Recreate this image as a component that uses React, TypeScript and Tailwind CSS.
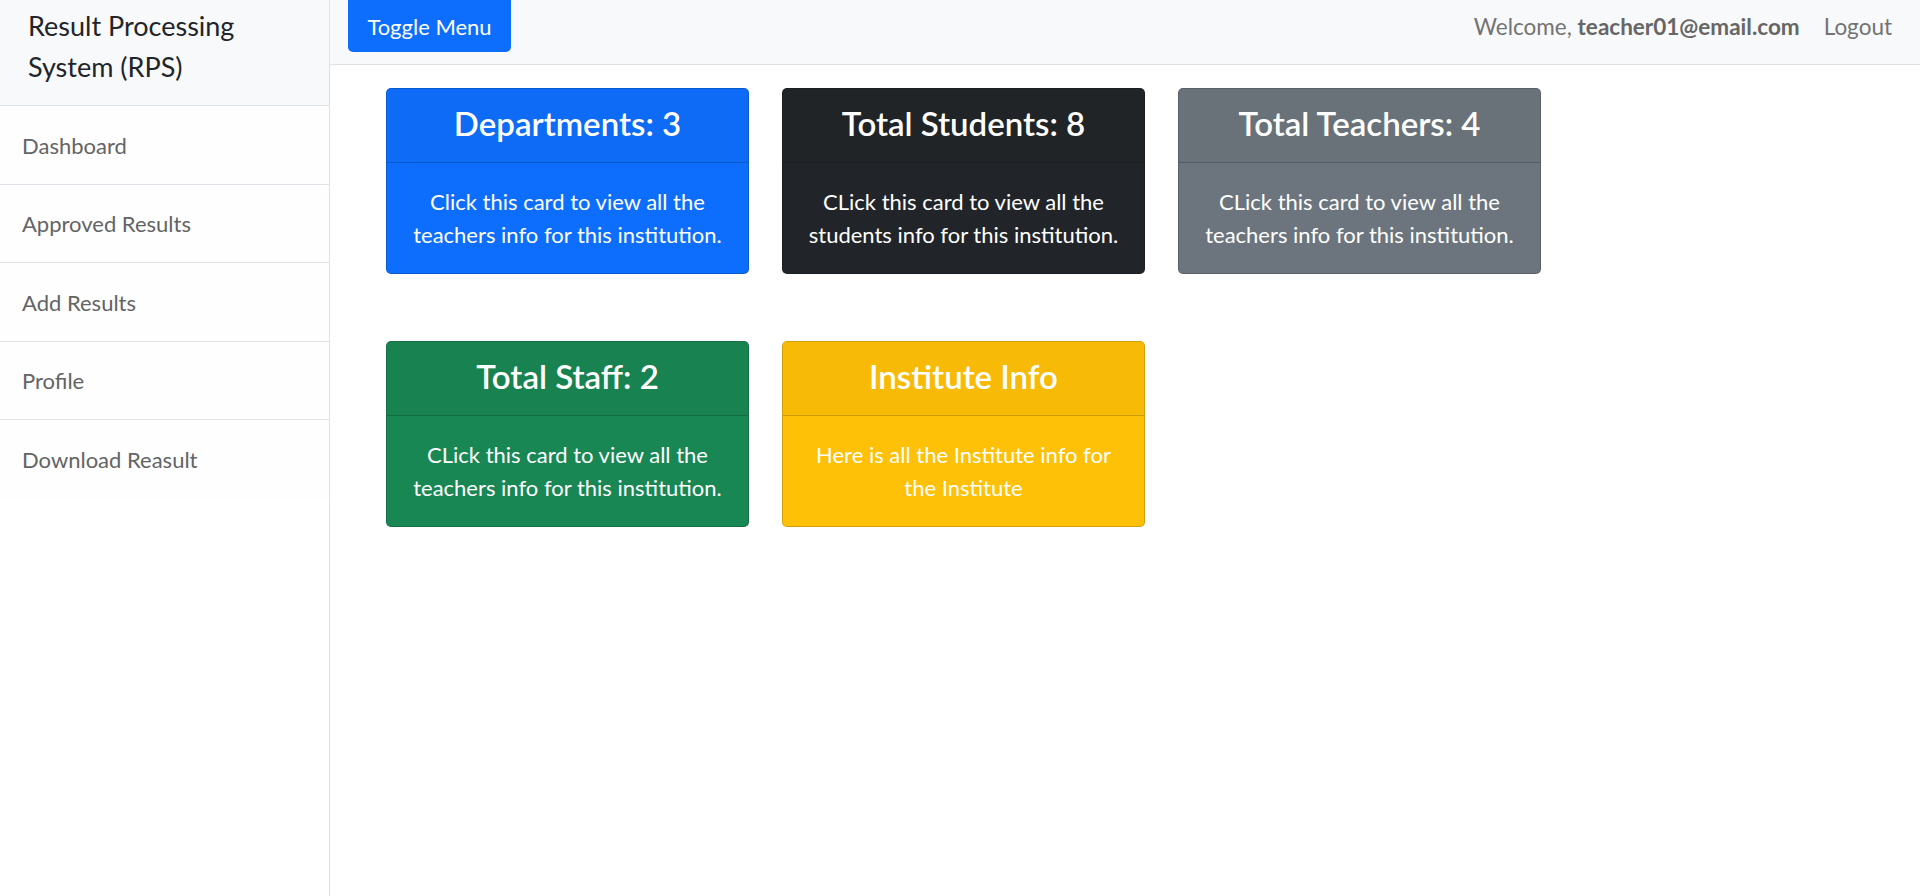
import React from 'react';

type Card = {
  title: string;
  text: string;
  head: string;
  body: string;
};

const cards: Card[] = [
  {
    title: 'Departments: 3',
    text: 'Click this card to view all the teachers info for this institution.',
    head: 'bg-[#0d6bf5]',
    body: 'bg-[#0d6efd]',
  },
  {
    title: 'Total Students: 8',
    text: 'CLick this card to view all the students info for this institution.',
    head: 'bg-[#202427]',
    body: 'bg-[#212529]',
  },
  {
    title: 'Total Teachers: 4',
    text: 'CLick this card to view all the teachers info for this institution.',
    head: 'bg-[#697279]',
    body: 'bg-[#6c757d]',
  },
  {
    title: 'Total Staff: 2',
    text: 'CLick this card to view all the teachers info for this institution.',
    head: 'bg-[#188351]',
    body: 'bg-[#198754]',
  },
  {
    title: 'Institute Info',
    text: 'Here is all the Institute info for the Institute',
    head: 'bg-[#f7bb07]',
    body: 'bg-[#ffc107]',
  },
];

const menu = ['Dashboard', 'Approved Results', 'Add Results', 'Profile', 'Download Reasult'];

const App = () => {
  return (
    <div className="flex h-[896px] w-full overflow-hidden bg-white font-['Lato','Open_Sans',sans-serif]">
      {/* Sidebar */}
      <aside className="flex w-[330px] shrink-0 flex-col border-r border-[#dee2e6] bg-white">
        <div className="h-[106px] border-b border-[#dee2e6] bg-[#f8f9fa] px-[28px] pt-[5px] text-[27px] leading-[41px] text-[#212529]">
          Result Processing System (RPS)
        </div>
        <ul>
          {menu.map((item, index) => (
            <li
              key={index}
              className={`flex h-[78.5px] items-center bg-[#fefefe] px-[22px] pt-[1px] text-[22px] text-[#636464] ${
                index < menu.length - 1 ? 'border-b border-[#dee2e6]' : ''
              }`}
            >
              {item}
            </li>
          ))}
        </ul>
      </aside>

      {/* Main */}
      <div className="flex flex-1 flex-col">
        <nav className="flex h-[65px] items-start justify-between border-b border-[#dee2e6] bg-[#f8f9fa] pl-[18px] pr-[28px]">
          <button className="h-[52px] w-[163px] rounded-b-[5px] bg-[#0d6efd] text-[22px] text-white">
            Toggle Menu
          </button>
          <div className="flex h-[54px] items-center gap-[24px] text-[22.5px] text-[#737373]">
            <span>
              Welcome, <span className="font-bold text-[#666666]">teacher01@email.com</span>
            </span>
            <span>Logout</span>
          </div>
        </nav>

        <main className="pl-[56px] pt-[23px]">
          <div className="grid grid-cols-[repeat(3,363px)] gap-x-[33px] gap-y-[67px]">
            {cards.map((card, index) => (
              <div
                key={index}
                className={`flex h-[186px] flex-col overflow-hidden rounded-[5px] border border-black/[0.175] text-center text-white ${card.body}`}
              >
                <div className={`flex h-[74px] items-center justify-center border-b border-black/[0.175] pb-[5px] ${card.head}`}>
                  <h4 className="text-[33px] font-semibold leading-[40px]">{card.title}</h4>
                </div>
                <div className="px-[22px] pt-[22px] text-[22px] leading-[33px]">
                  <p>{card.text}</p>
                </div>
              </div>
            ))}
          </div>
        </main>
      </div>
    </div>
  );
};

export default App;
